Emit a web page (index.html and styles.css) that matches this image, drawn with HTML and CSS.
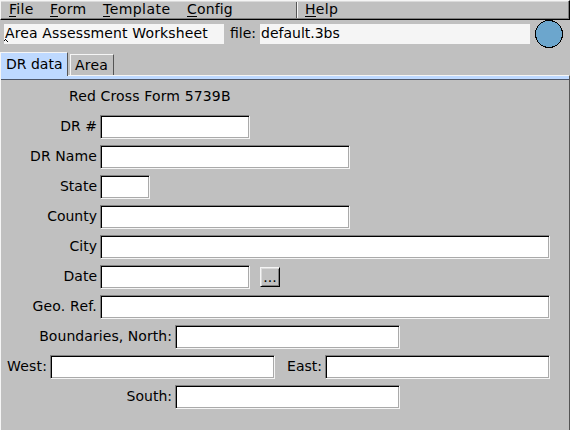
FILE: index.html
```html
<!DOCTYPE html>
<html lang="en">
<head>
<meta charset="utf-8">
<title>Area Assessment Worksheet</title>
<link rel="stylesheet" href="styles.css">
</head>
<body>
<nav class="menubar">
  <span class="item file"><u>F</u>ile</span>
  <span class="item form"><u>F</u>orm</span>
  <span class="item template"><u>T</u>emplate</span>
  <span class="item config"><u>C</u>onfig</span>
  <span class="item help"><u>H</u>elp</span>
</nav>
<header class="toolbar">
  <div class="output title">Area Assessment Worksheet
    <svg class="caret" width="5" height="3" shape-rendering="crispEdges"><path d="M1 0h1v1h-1zM0 1h1v1h-1zM2 1h1v1h-1zM3 2h1v1h-1z"/></svg>
  </div>
  <span class="file-label">file:</span>
  <div class="output filename">default.3bs</div>
  <svg class="dial" width="28" height="28" viewBox="0 0 28 28" shape-rendering="crispEdges"><circle cx="14" cy="14" r="13.5" fill="#6ca6cd" stroke="#000"/></svg>
</header>
<div class="tabs">
  <div class="tab active">DR data</div>
  <div class="tab">Area</div>
</div>
<main class="panel">
  <div class="heading">Red Cross Form 5739B</div>
  <div class="row"><label class="main-label">DR #</label><div class="field w150"></div></div>
  <div class="row"><label class="main-label name">DR Name</label><div class="field w250"></div></div>
  <div class="row"><label class="main-label">State</label><div class="field w50"></div></div>
  <div class="row"><label class="main-label">County</label><div class="field w250"></div></div>
  <div class="row"><label class="main-label">City</label><div class="field w450"></div></div>
  <div class="row"><label class="main-label">Date</label><div class="field w150"></div><button class="more">...</button></div>
  <div class="row"><label class="main-label geo">Geo. Ref.</label><div class="field w450"></div></div>
  <div class="row"><label class="wide-label north">Boundaries, North:</label><div class="field w225"></div></div>
  <div class="row"><label class="west-label">West:</label><div class="field w225"></div><label class="east-label">East:</label><div class="field w225"></div></div>
  <div class="row"><label class="wide-label">South:</label><div class="field w225"></div></div>
</main>
</body>
</html>
```
FILE: styles.css
```css
* { box-sizing: border-box; }
body {
  margin: 0;
  width: 570px;
  height: 430px;
  overflow: hidden;
  display: flex;
  flex-direction: column;
  background: #c0c0c0;
  color: #000;
  font: 14px/16px "DejaVu Sans", sans-serif;
  white-space: nowrap;
}
.menubar {
  display: flex;
  height: 20px;
  flex: none;
  border: 1px solid;
  border-color: #f5f5f5 #000 #000 #f5f5f5;
  box-shadow: inset -1px -1px #808080, inset 0 1px #dadada;
}
.item { padding-left: 8px; letter-spacing: 0.3px; }
.item u { text-decoration: none; box-shadow: inset 0 -1px #000; }
.file { width: 41px; }
.form { width: 53px; }
.template { width: 84px; letter-spacing: 0.45px; }
.config { width: 117px; letter-spacing: 0.15px; }
.help {
  height: 16px;
  margin-top: 1px;
  line-height: 14px;
  border-left: 1px solid #555;
  box-shadow: inset 1px 0 #f5f5f5;
}
.toolbar {
  display: flex;
  height: 32px;
  flex: none;
  padding-left: 4px;
}
.output {
  position: relative;
  height: 20px;
  margin-top: 4px;
  padding: 1px;
  background: #f5f5f5;
}
.title { width: 220px; letter-spacing: 0.14px; }
.caret { position: absolute; left: 0; top: 15px; }
.file-label { width: 36px; padding: 5px 0 0 6px; }
.filename { width: 270px; }
.dial { margin-left: 5px; }
.tabs {
  display: flex;
  align-items: flex-end;
  gap: 2px;
  height: 23px;
  flex: none;
}
.tab {
  width: 44px;
  height: 21px;
  padding: 2px 0 0 4px;
  letter-spacing: 0.2px;
  border: 1px solid;
  border-color: #f5f5f5 #555 transparent #f5f5f5;
  border-bottom: 0;
}
.active {
  position: relative;
  z-index: 1;
  width: 68px;
  height: 24px;
  margin-bottom: -1px;
  padding: 3px 0 0 5px;
  letter-spacing: 0;
  background: #bed9ff;
}
.panel {
  flex: 1;
  padding-top: 12px;
  border: 1px solid;
  border-color: #f5f5f5 #555 transparent #f5f5f5;
  border-bottom: 0;
  box-shadow: inset 0 3px #bed9ff, inset 0 4px #4d5668;
}
.heading { height: 27px; padding-left: 68px; letter-spacing: 0.14px; }
.row { display: flex; height: 24px; margin-bottom: 6px; }
.row label { padding: 3px 3px 0 0; text-align: right; }
.main-label { width: 99px; }
.name { letter-spacing: 0.1px; }
.geo { letter-spacing: 0.2px; }
.wide-label { width: 174px; }
.north { letter-spacing: 0.06px; }
.west-label { width: 49px; letter-spacing: 0.15px; }
.east-label { width: 50px; }
.field {
  height: 24px;
  background: #fff;
  border: 1px solid;
  border-color: #808080 #f5f5f5 #f5f5f5 #808080;
  box-shadow: inset 1px 1px #000, inset -1px -1px #aaa;
}
.w50 { width: 50px; }
.w150 { width: 150px; }
.w225 { width: 225px; }
.w250 { width: 250px; }
.w450 { width: 450px; }
.more {
  width: 20px;
  height: 20px;
  margin: 2px 0 0 10px;
  padding: 0;
  font: inherit;
  color: #000;
  background: #c0c0c0;
  border: 1px solid;
  border-color: #f5f5f5 #000 #000 #f5f5f5;
  box-shadow: inset 1px 1px #dadada, inset -1px -1px #808080;
}
```
